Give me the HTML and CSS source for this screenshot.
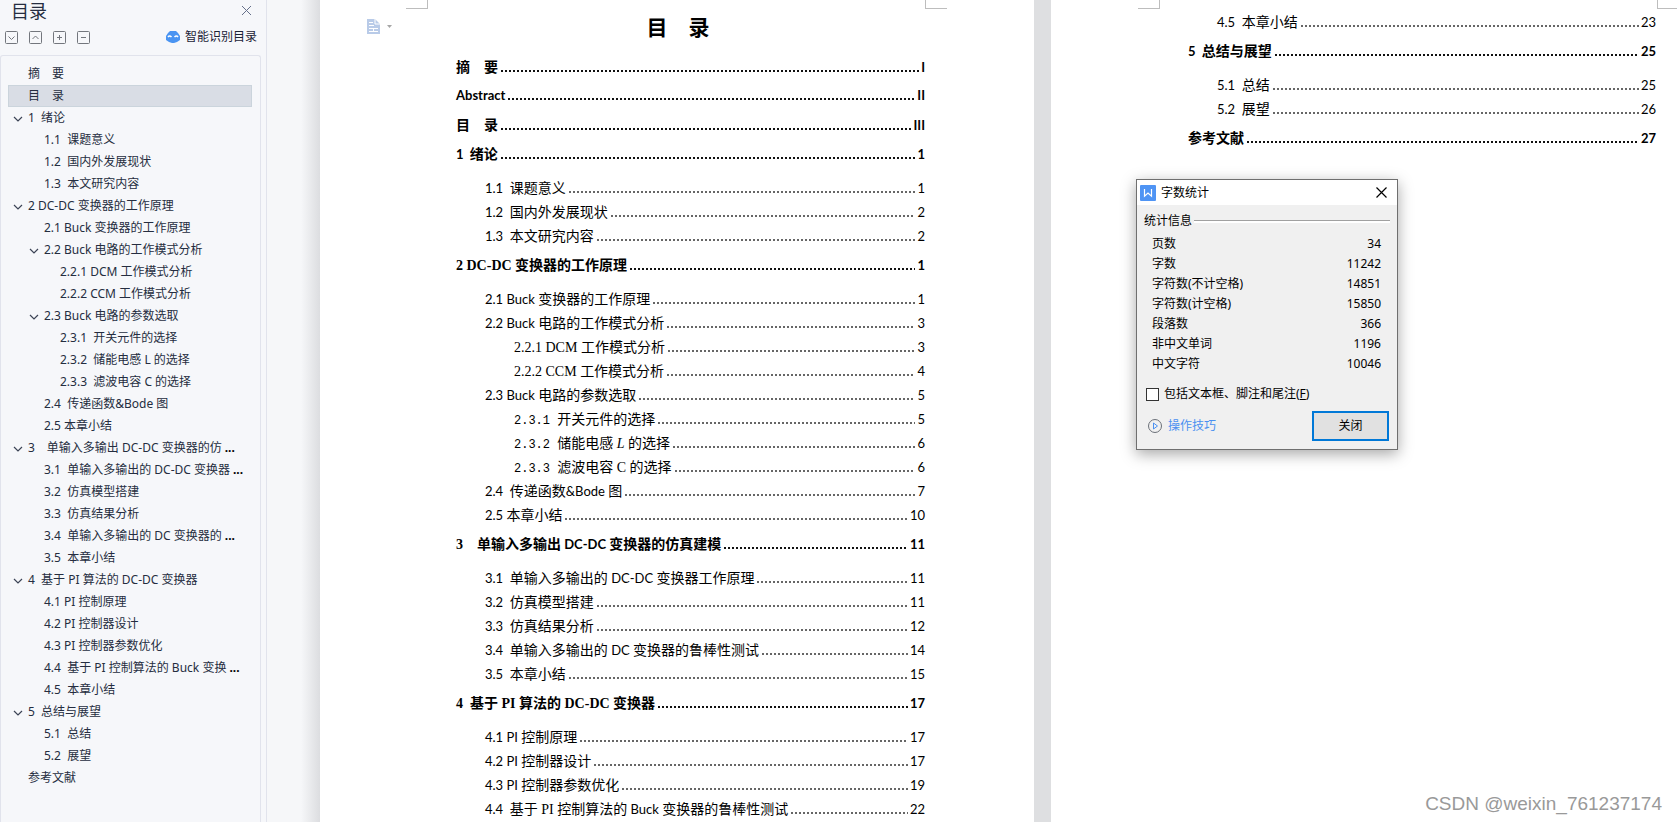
FILE: index.html
```html
<!DOCTYPE html>
<html lang="zh-CN">
<head>
<meta charset="utf-8">
<title>目录</title>
<link rel="stylesheet" href="styles.css">
</head>
<body>
<svg class="defs" aria-hidden="true">
  <symbol id="chevron" viewBox="0 0 10 10"><path d="M1 3l4 4 4-4" fill="none" stroke="#3c4456" stroke-width="1.2"/></symbol>
</svg>
<div class="app">
  <aside class="sidebar">
    <header class="side-head">
      <h2>目录</h2>
      <button class="plain" aria-label="关闭目录"><svg width="11" height="11" viewBox="0 0 11 11"><path d="M1 1l9 9M10 1l-9 9" stroke="#66708a" fill="none"/></svg></button>
    </header>
    <div class="side-tools">
      <button class="plain" aria-label="展开"><svg width="13" height="13" viewBox="0 0 13 13"><rect x=".5" y=".5" width="12" height="12" rx="1" fill="none" stroke="#73767d"/><path d="M3.5 5.5l3 3 3-3" fill="none" stroke="#73767d"/></svg></button>
      <button class="plain" aria-label="收起"><svg width="13" height="13" viewBox="0 0 13 13"><rect x=".5" y=".5" width="12" height="12" rx="1" fill="none" stroke="#73767d"/><path d="M3.5 8l3-3 3 3" fill="none" stroke="#73767d"/></svg></button>
      <button class="plain" aria-label="增加"><svg width="13" height="13" viewBox="0 0 13 13"><rect x=".5" y=".5" width="12" height="12" rx="1" fill="none" stroke="#73767d"/><path d="M4 6.500h5M6.500 4v5" fill="none" stroke="#73767d"/></svg></button>
      <button class="plain" aria-label="减少"><svg width="13" height="13" viewBox="0 0 13 13"><rect x=".5" y=".5" width="12" height="12" rx="1" fill="none" stroke="#73767d"/><path d="M4 6.500h5" fill="none" stroke="#73767d"/></svg></button>
      <button class="plain smart"><svg width="14" height="12" viewBox="0 0 14 12"><path d="M4 0h6l2 2 2 3v4l-3 2-3 1H6l-3-1-3-2V5l2-3z" fill="#4a94f2"/><path d="M2 6q1.500-2 3.500 0M8.500 6q2-2 3.500 0" fill="none" stroke="#fff" stroke-width="1.500"/></svg>智能识别目录</button>
    </div>
    <nav class="tree">
      <a href="#" class="l1">摘　要</a>
      <a href="#" class="l1 current">目　录</a>
      <a href="#" class="l1"><svg><use href="#chevron"/></svg>1&nbsp; 绪论</a>
      <a href="#" class="l2">1.1&nbsp; 课题意义</a>
      <a href="#" class="l2">1.2&nbsp; 国内外发展现状</a>
      <a href="#" class="l2">1.3&nbsp; 本文研究内容</a>
      <a href="#" class="l1"><svg><use href="#chevron"/></svg>2 DC-DC 变换器的工作原理</a>
      <a href="#" class="l2">2.1 Buck 变换器的工作原理</a>
      <a href="#" class="l2"><svg><use href="#chevron"/></svg>2.2 Buck 电路的工作模式分析</a>
      <a href="#" class="l3">2.2.1 DCM 工作模式分析</a>
      <a href="#" class="l3">2.2.2 CCM 工作模式分析</a>
      <a href="#" class="l2"><svg><use href="#chevron"/></svg>2.3 Buck 电路的参数选取</a>
      <a href="#" class="l3">2.3.1&nbsp; 开关元件的选择</a>
      <a href="#" class="l3">2.3.2&nbsp; 储能电感 L 的选择</a>
      <a href="#" class="l3">2.3.3&nbsp; 滤波电容 C 的选择</a>
      <a href="#" class="l2">2.4&nbsp; 传递函数&amp;Bode 图</a>
      <a href="#" class="l2">2.5 本章小结</a>
      <a href="#" class="l1"><svg><use href="#chevron"/></svg>3　单输入多输出 DC-DC 变换器的仿<b>...</b></a>
      <a href="#" class="l2">3.1&nbsp; 单输入多输出的 DC-DC 变换器<b>...</b></a>
      <a href="#" class="l2">3.2&nbsp; 仿真模型搭建</a>
      <a href="#" class="l2">3.3&nbsp; 仿真结果分析</a>
      <a href="#" class="l2">3.4&nbsp; 单输入多输出的 DC 变换器的<b>...</b></a>
      <a href="#" class="l2">3.5&nbsp; 本章小结</a>
      <a href="#" class="l1"><svg><use href="#chevron"/></svg>4&nbsp; 基于 PI 算法的 DC-DC 变换器</a>
      <a href="#" class="l2">4.1 PI 控制原理</a>
      <a href="#" class="l2">4.2 PI 控制器设计</a>
      <a href="#" class="l2">4.3 PI 控制器参数优化</a>
      <a href="#" class="l2">4.4&nbsp; 基于 PI 控制算法的 Buck 变换<b>...</b></a>
      <a href="#" class="l2">4.5&nbsp; 本章小结</a>
      <a href="#" class="l1"><svg><use href="#chevron"/></svg>5&nbsp; 总结与展望</a>
      <a href="#" class="l2">5.1&nbsp; 总结</a>
      <a href="#" class="l2">5.2&nbsp; 展望</a>
      <a href="#" class="l1">参考文献</a>
    </nav>
  </aside>

  <main class="workspace">
    <section class="page page-one">
      <div class="marks"><i class="mark left"></i><i class="mark right"></i></div>
      <button class="plain toc-tool" aria-label="目录设置"><svg width="26" height="15" viewBox="0 0 26 15"><path d="M0 0h8l5 5v10H0z" fill="#b9cbe8"/><path d="M8 0v5h5" fill="none" stroke="#fff"/><path d="M2 3.500h4M2 6.500h5M2 9.500h9M2 12.500h9M6.500 10v2" stroke="#fff" fill="none"/><path d="M20 6h5l-2.500 3z" fill="#a6a6a6"/></svg></button>
      <h1>目　录</h1>
      <ol class="toc">
        <li class="h"><span>摘　要</span><i></i><span class="n">I</span></li>
        <li class="h"><span class="n">Abstract</span><i></i><span class="n">II</span></li>
        <li class="h"><span>目　录</span><i></i><span class="n">III</span></li>
        <li class="h"><span><span class="n">1  </span>绪论</span><i></i><span class="n">1</span></li>
        <li class="s"><span><span class="n">1.1  </span>课题意义</span><i></i><span class="n">1</span></li>
        <li class="s"><span><span class="n">1.2  </span>国内外发展现状</span><i></i><span class="n">2</span></li>
        <li class="s"><span><span class="n">1.3  </span>本文研究内容</span><i></i><span class="n">2</span></li>
        <li class="h"><span><span class="t">2 DC-DC </span>变换器的工作原理</span><i></i><span class="n">1</span></li>
        <li class="s"><span><span class="n">2.1 Buck </span>变换器的工作原理</span><i></i><span class="n">1</span></li>
        <li class="s"><span><span class="n">2.2 Buck </span>电路的工作模式分析</span><i></i><span class="n">3</span></li>
        <li class="s deep"><span><span class="t">2.2.1 DCM </span>工作模式分析</span><i></i><span class="n">3</span></li>
        <li class="s deep"><span><span class="t">2.2.2 CCM </span>工作模式分析</span><i></i><span class="n">4</span></li>
        <li class="s"><span><span class="n">2.3 Buck </span>电路的参数选取</span><i></i><span class="n">5</span></li>
        <li class="s deep"><span><span class="m">2.3.1 </span>开关元件的选择</span><i></i><span class="n">5</span></li>
        <li class="s deep"><span><span class="m">2.3.2 </span>储能电感<span class="t"> <em>L</em> </span>的选择</span><i></i><span class="n">6</span></li>
        <li class="s deep"><span><span class="m">2.3.3 </span>滤波电容<span class="t"> C </span>的选择</span><i></i><span class="n">6</span></li>
        <li class="s"><span><span class="n">2.4  </span>传递函数<span class="n">&amp;Bode </span>图</span><i></i><span class="n">7</span></li>
        <li class="s"><span><span class="n">2.5 </span>本章小结</span><i></i><span class="n">10</span></li>
        <li class="h"><span><span class="t">3</span>　单输入多输出<span class="n"> DC-DC </span>变换器的仿真建模</span><i></i><span class="n">11</span></li>
        <li class="s"><span><span class="n">3.1  </span>单输入多输出的<span class="n"> DC-DC </span>变换器工作原理</span><i></i><span class="n">11</span></li>
        <li class="s"><span><span class="n">3.2  </span>仿真模型搭建</span><i></i><span class="n">11</span></li>
        <li class="s"><span><span class="n">3.3  </span>仿真结果分析</span><i></i><span class="n">12</span></li>
        <li class="s"><span><span class="n">3.4  </span>单输入多输出的<span class="n"> DC </span>变换器的鲁棒性测试</span><i></i><span class="n">14</span></li>
        <li class="s"><span><span class="n">3.5  </span>本章小结</span><i></i><span class="n">15</span></li>
        <li class="h"><span><span class="t">4  </span>基于<span class="t"> PI </span>算法的<span class="t"> DC-DC </span>变换器</span><i></i><span class="n">17</span></li>
        <li class="s"><span><span class="n">4.1 PI </span>控制原理</span><i></i><span class="n">17</span></li>
        <li class="s"><span><span class="n">4.2 PI </span>控制器设计</span><i></i><span class="n">17</span></li>
        <li class="s"><span><span class="n">4.3 PI </span>控制器参数优化</span><i></i><span class="n">19</span></li>
        <li class="s"><span><span class="n">4.4  </span>基于<span class="t"> PI </span>控制算法的<span class="n"> Buck </span>变换器的鲁棒性测试</span><i></i><span class="n">22</span></li>
      </ol>
    </section>

    <section class="page page-two">
      <div class="marks"><i class="mark left"></i><i class="mark right"></i></div>
      <ol class="toc">
        <li class="s"><span><span class="n">4.5  </span>本章小结</span><i></i><span class="n">23</span></li>
        <li class="h"><span><span class="n">5  </span>总结与展望</span><i></i><span class="n">25</span></li>
        <li class="s"><span><span class="n">5.1  </span>总结</span><i></i><span class="n">25</span></li>
        <li class="s"><span><span class="n">5.2  </span>展望</span><i></i><span class="n">26</span></li>
        <li class="h"><span>参考文献</span><i></i><span class="n">27</span></li>
      </ol>

      <div class="dialog" role="dialog" aria-labelledby="dlg-title">
        <header class="dlg-head">
          <svg width="16" height="16" viewBox="0 0 16 16"><rect width="16" height="16" rx="1" fill="#4f94f4"/><path d="M4.500 4v7.200L8 8l3.500 3.200V4" fill="none" stroke="#fff" stroke-width="1.200"/></svg>
          <h2 id="dlg-title">字数统计</h2>
          <button class="plain" aria-label="关闭对话框"><svg width="11" height="11" viewBox="0 0 11 11"><path d="M.5.5l10 10M10.500.5l-10 10" stroke="#000" stroke-width="1.200" fill="none"/></svg></button>
        </header>
        <div class="dlg-body">
          <h3>统计信息</h3>
          <table>
            <tr><th scope="row">页数</th><td>34</td></tr>
            <tr><th scope="row">字数</th><td>11242</td></tr>
            <tr><th scope="row">字符数(不计空格)</th><td>14851</td></tr>
            <tr><th scope="row">字符数(计空格)</th><td>15850</td></tr>
            <tr><th scope="row">段落数</th><td>366</td></tr>
            <tr><th scope="row">非中文单词</th><td>1196</td></tr>
            <tr><th scope="row">中文字符</th><td>10046</td></tr>
          </table>
          <label class="check" for="notes"><input type="checkbox" id="notes"><span>包括文本框、脚注和尾注(<u>F</u>)</span></label>
          <footer class="dlg-foot">
            <a href="#"><svg width="14" height="14" viewBox="0 0 14 14"><circle cx="7" cy="7" r="6.500" fill="none" stroke="#6b7078"/><path d="M5.500 4v6L9.500 7z" fill="none" stroke="#4a90f0"/></svg>操作技巧</a>
            <button class="close">关闭</button>
          </footer>
        </div>
      </div>
      <p class="watermark">CSDN @weixin_761237174</p>
    </section>
  </main>
</div>
</body>
</html>
```

FILE: styles.css
```css
* { box-sizing: border-box; }
body {
  margin: 0;
  color: #000;
  font: 12px/16px "Noto Sans", "Noto Sans CJK SC", sans-serif;
}
h1, h2, h3, p, ol { margin: 0; padding: 0; font-weight: 400; }
a { text-decoration: none; }
button { font: inherit; color: inherit; }
.plain {
  display: flex;
  align-items: center;
  padding: 0;
  border: 0;
  background: none;
}
.defs { display: none; }
.app {
  display: flex;
  height: 100vh;
  overflow: hidden;
}

/* Outline panel */
.sidebar {
  display: flex;
  flex-direction: column;
  flex: none;
  width: 267px;
  padding-right: 5px;
  border-right: 1px solid #e1e3ec;
  background: #f6f7fa;
  color: #252d40;
}
.side-head {
  display: flex;
  justify-content: space-between;
  align-items: center;
  height: 20px;
  padding: 0 9px 0 11px;
}
.side-head h2 {
  font-family: "Noto Sans CJK SC", sans-serif;
  font-size: 18px;
  line-height: 20px;
}
.side-tools {
  display: flex;
  align-items: center;
  gap: 11px;
  height: 35px;
  padding: 0 4px 1px 5px;
}
.smart {
  gap: 5px;
  margin-left: auto;
  color: #1b2236;
}
.tree {
  display: flex;
  flex-direction: column;
  flex: 1;
  padding: 7px 8px 7px 7px;
  border: 1px solid #e1e3ec;
  border-bottom: 0;
  border-radius: 3px 3px 0 0;
}
.tree a {
  display: flex;
  align-items: center;
  flex: none;
  height: 22px;
  border: 1px solid transparent;
  color: inherit;
  white-space: pre;
}
.tree svg {
  width: 10px;
  height: 10px;
  margin: 2px 5px 0 -15px;
}
.tree b {
  margin-left: 3px;
  color: #000;
}
.tree .l1 { padding-left: 19px; }
.tree .l2 { padding-left: 35px; }
.tree .l3 { padding-left: 51px; }
.tree .current {
  border-color: #cbd4dc;
  background: #d9dde5;
}

/* Document */
.workspace {
  display: grid;
  grid-template-columns: minmax(0, 714fr) minmax(0, 626fr);
  flex: 1;
  gap: 17px;
  min-width: 0;
  padding-left: 53px;
  background: linear-gradient(to right, #f6f7f9 34px, #dcdde0 53px, #dedfe1 54px);
}
.page {
  position: relative;
  min-width: 0;
  background: #fff;
}
.page-one { padding: 0 87px 0 86px; }
.page-two { padding-left: 87px; }
.marks {
  display: flex;
  justify-content: space-between;
  height: 9px;
}
.mark {
  width: 22px;
  border: 0 solid #bdbdbd;
  border-bottom-width: 1px;
}
.mark.left { border-right-width: 1px; }
.mark.right { border-left-width: 1px; }
.page-two .mark.right { width: 20px; }
.toc-tool {
  position: absolute;
  top: 19px;
  left: 47px;
}
h1 {
  margin: 5px 19px 15px 22px;
  font-size: 21px;
  font-weight: 700;
  line-height: 26px;
  text-align: center;
}
.toc {
  margin: 0 22px 0 50px;
  font-family: "Noto Sans CJK SC", sans-serif;
  font-size: 14px;
  list-style: none;
}
.page-two .toc { margin-right: 21px; }
.toc li {
  display: flex;
  align-items: baseline;
  white-space: pre;
}
.toc .h {
  height: 23px;
  font-weight: 700;
  line-height: 23px;
}
.toc .s {
  height: 24px;
  padding-left: 29px;
  line-height: 24px;
}
.toc .deep { padding-left: 58px; }
.toc li + .h { margin-top: 6px; }
.toc .h + .s { margin-top: 10px; }
.toc i {
  flex: 1;
  height: 2px;
  margin: 0 2px 0 3px;
  background: repeating-linear-gradient(to right, #666 0 2px, transparent 2px 4px);
}
.toc .h i { background: repeating-linear-gradient(to right, #111 0 2px, transparent 2px 4px); }
.n { font-family: Lato, sans-serif; font-size: 13px; }
.t { font-family: "Liberation Serif", serif; font-size: 14px; }
.m { font-family: "Liberation Mono", monospace; font-size: 12px; }

/* Word count dialog */
.dialog {
  position: absolute;
  top: 179px;
  left: 85px;
  width: 262px;
  border: 1px solid #6f6f6f;
  background: #f0f0f0;
  box-shadow: 0 4px 14px rgba(0, 0, 0, .35);
}
.dlg-head {
  display: flex;
  align-items: center;
  gap: 5px;
  height: 25px;
  padding: 0 10px 0 3px;
  background: #fff;
}
.dlg-head h2 { font-size: 12px; }
.dlg-head .plain { margin-left: auto; }
.dlg-body { padding: 8px 7px; }
.dlg-body h3 {
  display: flex;
  align-items: center;
  gap: 2px;
  font-size: 12px;
}
.dlg-body h3::after {
  content: "";
  flex: 1;
  height: 2px;
  border-top: 1px solid #a0a0a0;
  background: #fff;
}
table {
  width: 100%;
  margin-top: 5px;
  border-collapse: collapse;
}
tr { height: 20px; }
th, td { padding: 0 9px 0 8px; }
th { font-weight: 400; text-align: left; }
td { text-align: right; }
.check {
  display: flex;
  align-items: center;
  gap: 5px;
  margin: 12px 0 9px 2px;
}
.check input {
  appearance: none;
  width: 13px;
  height: 13px;
  margin: 0;
  border: 1px solid #333;
  background: #fff;
}
.dlg-foot {
  display: flex;
  align-items: center;
  justify-content: space-between;
  padding: 0 1px 0 4px;
}
.dlg-foot a {
  display: flex;
  align-items: center;
  gap: 6px;
  color: #4a90f0;
}
.close {
  width: 77px;
  height: 30px;
  padding: 0;
  border: 2px solid #0078d7;
  background: #e1e1e1;
}
.watermark {
  position: absolute;
  right: 15px;
  bottom: 7px;
  color: #999;
  font: 19px/22px "Liberation Sans", Arial, sans-serif;
}
```
